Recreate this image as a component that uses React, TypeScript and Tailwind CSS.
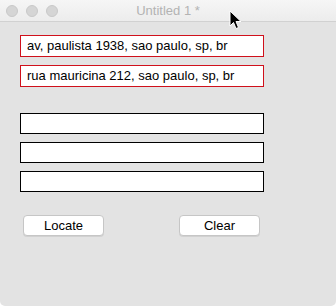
import React from 'react'

const filled = [
  'av, paulista 1938, sao paulo, sp, br',
  'rua mauricina 212, sao paulo, sp, br',
]

function Cursor() {
  return (
    <svg
      className="absolute left-[229px] top-[10px]"
      width="14"
      height="21"
      viewBox="0 0 14 21"
    >
      <path
        d="M1 1 L1 16 L4.5 12.5 L7 18.5 L9.5 17.5 L7 11.5 L12 11.5 Z"
        fill="#000"
        stroke="#fff"
        strokeWidth="1"
        strokeLinejoin="round"
      />
    </svg>
  )
}

export default function App() {
  return (
    <div
      className="relative flex h-[306px] w-[336px] flex-col overflow-hidden rounded-b-[5px] bg-[#e3e3e3]"
      style={{ fontFamily: '"Liberation Sans", Arial, sans-serif' }}
    >
      {/* title bar */}
      <div className="relative flex h-[22px] items-center justify-center border-b border-[#d1d1d1] bg-gradient-to-b from-[#f6f6f6] to-[#ececec]">
        <div className="absolute left-[6px] top-[5px] flex gap-[8px]">
          <span className="h-[12px] w-[12px] rounded-full border border-[#c9c9c9] bg-[#d5d5d5]" />
          <span className="h-[12px] w-[12px] rounded-full border border-[#c9c9c9] bg-[#d5d5d5]" />
          <span className="h-[12px] w-[12px] rounded-full border border-[#c9c9c9] bg-[#d5d5d5]" />
        </div>
        <span className="text-[13px] text-[#b3b3b3]">Untitled 1 *</span>
      </div>

      <div className="flex flex-col px-[20px] pt-[13px]">
        <div className="flex flex-col gap-[8px]">
          {filled.map((v) => (
            <div
              key={v}
              className="flex h-[22px] w-[244px] items-center border border-[#d0101b] bg-white pl-[6px] text-[13px] text-black"
            >
              {v}
            </div>
          ))}
        </div>

        <div className="mt-[26px] flex flex-col gap-[8px]">
          {[0, 1, 2].map((i) => (
            <div key={i} className="h-[21px] w-[244px] border-[1.5px] border-black bg-white" />
          ))}
        </div>

        <div className="mt-[23px] flex w-[240px] justify-between pl-[3px]">
          <button className="h-[21px] w-[81px] rounded-[4px] border border-[#c6c6c6] bg-white text-[13px] text-black shadow-[0_1px_0_rgba(0,0,0,0.08)]">
            Locate
          </button>
          <button className="h-[21px] w-[81px] rounded-[4px] border border-[#c6c6c6] bg-white text-[13px] text-black shadow-[0_1px_0_rgba(0,0,0,0.08)]">
            Clear
          </button>
        </div>
      </div>

      <Cursor />
    </div>
  )
}
